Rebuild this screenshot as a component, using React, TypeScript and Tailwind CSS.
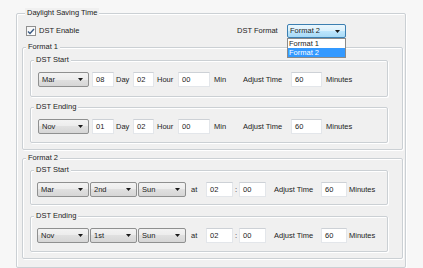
import type { ReactNode } from 'react';

const boxLine =
  'border border-[#cbd0d4] rounded-[2px] shadow-[inset_1px_1px_0_#ffffff,1px_1px_0_#ffffff]';

function GroupBox({
  title,
  className,
  children,
}: {
  title: string;
  className: string;
  children: ReactNode;
}) {
  return (
    <fieldset className={`${boxLine} ${className}`}>
      <legend className="ml-[3px] h-[10px] bg-[#f0f0f0] px-[2px] leading-[10px]">{title}</legend>
      {children}
    </fieldset>
  );
}

function Combo({ value, className }: { value: string; className: string }) {
  return (
    <div
      className={`flex h-[15px] items-center justify-between rounded-[2px] border border-[#8f9090] bg-[linear-gradient(#f3f3f3_0%,#ececec_50%,#e0e0e0_50%,#d6d6d6_100%)] pl-[3px] pr-[5px] ${className}`}
    >
      <span>{value}</span>
      <svg width="5" height="3" viewBox="0 0 5 3">
        <path d="M0 0h5L2.5 3z" fill="#1a1a1a" />
      </svg>
    </div>
  );
}

function Field({ value, className }: { value: string; className: string }) {
  return (
    <div
      className={`flex h-[15px] items-center border border-[#e3e6ea] border-t-[#cdd1d6] bg-white pl-[3px] ${className}`}
    >
      {value}
    </div>
  );
}

// Format 1: month, day, hour, minute
function DayRow({ month, day }: { month: string; day: string }) {
  return (
    <div className="mt-[7px] flex h-[15px] items-center">
      <Combo value={month} className="ml-[7px] w-[51px]" />
      <Field value={day} className="ml-[3px] w-[22px]" />
      <span className="w-[19px] pl-[2px]">Day</span>
      <Field value="02" className="w-[21px]" />
      <span className="w-[24px] pl-[3px]">Hour</span>
      <Field value="00" className="w-[32px]" />
      <span className="w-[33px] pl-[4px]">Min</span>
      <span className="w-[48px]">Adjust Time</span>
      <Field value="60" className="w-[31px]" />
      <span className="pl-[4px]">Minutes</span>
    </div>
  );
}

// Format 2: month, week, weekday, time
function WeekRow({ month, week }: { month: string; week: string }) {
  return (
    <div className="mt-[7px] flex h-[15px] items-center">
      <Combo value={month} className="ml-[6px] w-[52px]" />
      <Combo value={week} className="ml-[1px] w-[47px]" />
      <Combo value="Sun" className="ml-[1px] w-[48px]" />
      <span className="w-[20px] pl-[5px]">at</span>
      <Field value="02" className="w-[27px]" />
      <span className="w-[6px] pl-[2px]">:</span>
      <Field value="00" className="w-[27px]" />
      <span className="w-[55px] pl-[8px]">Adjust Time</span>
      <Field value="60" className="w-[26px]" />
      <span className="pl-[2px]">Minutes</span>
    </div>
  );
}

export default function App() {
  return (
    <div className="h-[268px] w-[423px] overflow-hidden bg-[#f7f7f7] pl-[16px] pt-[8px] font-['Liberation_Sans',Arial,sans-serif] text-[7.5px] text-[#222]">
      <GroupBox title="Daylight Saving Time" className="h-[260px] w-[390px] bg-[#f0f0f0] pl-[5px]">
        <div className="mt-[6px] flex h-[14px] items-center">
          <div className="ml-[4px] flex h-[10px] w-[10px] items-center justify-center border border-[#8f8f8f] bg-[linear-gradient(135deg,#f4f4f4,#ffffff)]">
            <svg width="8" height="7" viewBox="0 0 8 7">
              <path d="M1 3.5 3 5.5 7 1" fill="none" stroke="#3b5a82" strokeWidth="1.4" />
            </svg>
          </div>
          <span className="w-[201px] pl-[3px]">DST Enable</span>
          <span className="w-[50px]">DST Format</span>
          <div className="relative">
            <div className="flex h-[14px] w-[59px] items-center justify-between rounded-[2px] border border-[#3c7fb1] bg-[linear-gradient(#eaf6fd_0%,#d9f0fc_50%,#bee6fd_50%,#a7d9f5_100%)] pl-[2px] pr-[5px]">
              <span>Format 2</span>
              <svg width="5" height="3" viewBox="0 0 5 3">
                <path d="M0 0h5L2.5 3z" fill="#1a1a1a" />
              </svg>
            </div>
            <div className="absolute left-0 top-[14px] z-10 w-[59px] border border-[#8a8a8a] bg-white">
              <div className="h-[9px] pl-[1px] leading-[9px]">Format 1</div>
              <div className="h-[9px] bg-[#3399ff] pl-[1px] leading-[9px] text-white">Format 2</div>
            </div>
          </div>
        </div>

        <GroupBox title="Format 1" className="mt-[4px] w-[381px] pb-[6px]">
          <GroupBox title="DST Start" className="ml-[7px] mt-[3px] w-[358px] pb-[9px]">
            <div className="mt-[1px]">
              <DayRow month="Mar" day="08" />
            </div>
          </GroupBox>
          <GroupBox title="DST Ending" className="ml-[7px] mt-[5px] w-[358px] pb-[8px]">
            <DayRow month="Nov" day="01" />
          </GroupBox>
        </GroupBox>

        <GroupBox title="Format 2" className="mt-[3px] w-[381px] pb-[6px]">
          <GroupBox title="DST Start" className="ml-[7px] mt-[2px] w-[358px] pb-[7px]">
            <div className="mt-[1px]">
              <WeekRow month="Mar" week="2nd" />
            </div>
          </GroupBox>
          <GroupBox title="DST Ending" className="ml-[7px] mt-[6px] w-[358px] pb-[8px]">
            <WeekRow month="Nov" week="1st" />
          </GroupBox>
        </GroupBox>
      </GroupBox>
    </div>
  );
}
